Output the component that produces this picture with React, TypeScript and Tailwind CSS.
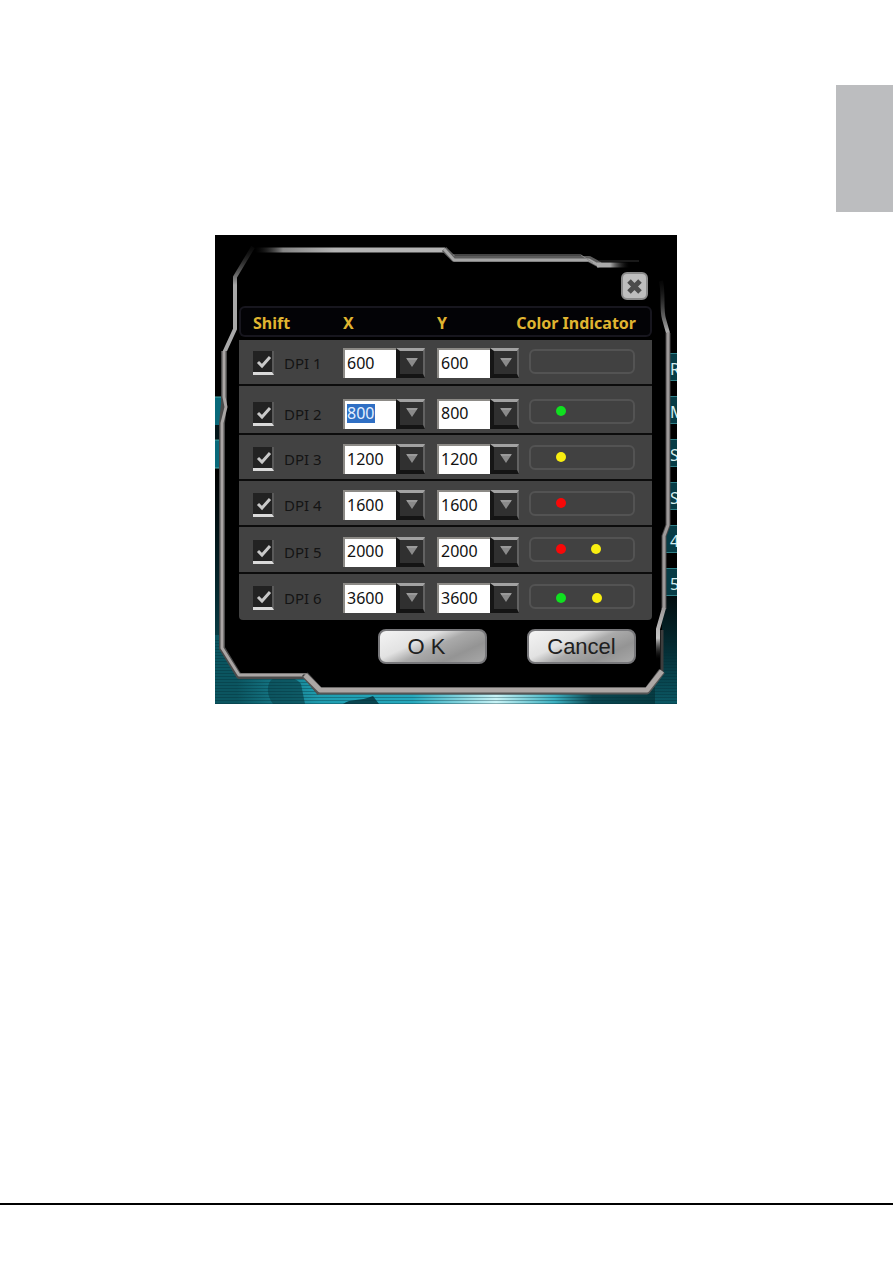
import React from "react";

type Led = { color: string; x: number; y: number };
type Level = {
  id: number;
  value: string;
  row: string;
  pad: string;
  leds: Led[];
  focused?: boolean;
};

const GREEN = "#10e020";
const YELLOW = "#f8ee10";
const RED = "#f80808";

const levels: Level[] = [
  { id: 1, value: "600", row: "h-[46px]", pad: "pt-0.5", leds: [] },
  { id: 2, value: "800", row: "h-[49px]", pad: "pt-2", leds: [{ color: GREEN, x: 32, y: 12 }], focused: true },
  { id: 3, value: "1200", row: "h-[46px]", pad: "pt-1", leds: [{ color: YELLOW, x: 32, y: 12 }] },
  { id: 4, value: "1600", row: "h-[46px]", pad: "pt-1", leds: [{ color: RED, x: 32, y: 12 }] },
  { id: 5, value: "2000", row: "h-[47px]", pad: "pt-1", leds: [{ color: RED, x: 32, y: 12 }, { color: YELLOW, x: 67, y: 12 }] },
  { id: 6, value: "3600", row: "h-[46px]", pad: "pt-0.5", leds: [{ color: GREEN, x: 32, y: 14 }, { color: YELLOW, x: 68, y: 14 }] },
];

const steps = ["600", "800", "1200", "1600", "2000", "3600"];
const sideItems = ["R", "M", "S", "S", "4", "5"];

function Backdrop() {
  return (
    <svg aria-hidden="true" className="absolute inset-0 h-full w-full" viewBox="0 0 462 469" preserveAspectRatio="none">
      <defs>
        <linearGradient id="sea" x1="0" x2="1" y1="0" y2="0">
          <stop offset="0" stopColor="#0b5560" />
          <stop offset="0.2" stopColor="#1f9db0" />
          <stop offset="0.42" stopColor="#27a9bd" />
          <stop offset="0.62" stopColor="#c8f3f6" />
          <stop offset="0.76" stopColor="#3cb0c0" />
          <stop offset="0.85" stopColor="#0a4650" />
          <stop offset="1" stopColor="#063b42" />
        </linearGradient>
        <linearGradient id="seaSide" x1="0" x2="0" y1="0" y2="1">
          <stop offset="0" stopColor="#000000" />
          <stop offset="0.5" stopColor="#04262c" />
          <stop offset="1" stopColor="#0b5864" />
        </linearGradient>
        <pattern id="scan" width="4" height="3" patternUnits="userSpaceOnUse">
          <rect width="4" height="1" fill="#022a33" opacity="0.35" />
        </pattern>
      </defs>
      <rect width="462" height="469" fill="#000" />
      <rect y="235" width="30" height="234" fill="url(#seaSide)" />
      <rect x="430" y="340" width="32" height="129" fill="url(#seaSide)" />
      <rect x="22" y="425" width="418" height="44" fill="url(#sea)" />
      <rect y="400" width="22" height="69" fill="#0b5560" />
      <path d="M56 445c8-6 24-4 30 4l4 20H58c-6-8-7-18-2-24Z" fill="#0b4d58" opacity="0.8" />
      <path d="M128 469c8-6 16-2 30-8l6 8Z" fill="#0a4550" />
      <rect y="405" width="462" height="64" fill="url(#scan)" />
      <rect y="162" width="12" height="28" fill="#08697a" />
      <rect y="190" width="12" height="14" fill="#02161a" />
      <rect y="205" width="12" height="28" fill="#08697a" />
      <path d="M0 162H12M0 205H12M0 233H12" stroke="#49a7a6" />
    </svg>
  );
}

function Frame() {
  const outline =
    "M38 10L20 42L20 94L9 116V166L12 172L7 188V413L24 440H91L105 457H432L447 436V374L449 300L453 292V98L447 82V46C447 34 443 28 432 26L388 27L376 22H240L230 15H48Z";
  return (
    <svg aria-hidden="true" className="absolute inset-0 h-full w-full" viewBox="0 0 462 469" preserveAspectRatio="none">
      <defs>
        <linearGradient id="topFade" x1="40" x2="120" y1="0" y2="0" gradientUnits="userSpaceOnUse">
          <stop offset="0" stopColor="#222" stopOpacity="0" />
          <stop offset="0.35" stopColor="#858585" />
          <stop offset="1" stopColor="#b4b4b4" />
        </linearGradient>
        <linearGradient id="leftFade" x1="0" x2="0" y1="12" y2="50" gradientUnits="userSpaceOnUse">
          <stop offset="0" stopColor="#222" stopOpacity="0.2" />
          <stop offset="1" stopColor="#a8a8a8" />
        </linearGradient>
        <linearGradient id="rightFade" x1="0" x2="0" y1="44" y2="96" gradientUnits="userSpaceOnUse">
          <stop offset="0" stopColor="#222" stopOpacity="0.1" />
          <stop offset="1" stopColor="#aaa" />
        </linearGradient>
        <linearGradient id="tailFade" x1="376" x2="414" y1="0" y2="0" gradientUnits="userSpaceOnUse">
          <stop offset="0" stopColor="#aaa" />
          <stop offset="0.5" stopColor="#aaa" />
          <stop offset="1" stopColor="#222" stopOpacity="0" />
        </linearGradient>
        <linearGradient id="lowFade" x1="0" x2="0" y1="372" y2="424" gradientUnits="userSpaceOnUse">
          <stop offset="0" stopColor="#9d9999" />
          <stop offset="0.6" stopColor="#c4c4c4" />
          <stop offset="1" stopColor="#222" stopOpacity="0" />
        </linearGradient>
      </defs>
      <path d={outline} fill="#000" />
      <g fill="none" strokeLinejoin="round">
        <path d="M38 12L20 42V94L9 118" stroke="url(#leftFade)" strokeWidth="4" />
        <path d="M9 116V168L7 188V413L24 441H91L105 458" stroke="#4a4a4a" strokeWidth="6" />
        <path d="M9 116V162L11 172L7 188V413L24 440H91" stroke="#a9a5a4" strokeWidth="3" />
        <path d="M40 15H230" stroke="url(#topFade)" strokeWidth="5" />
        <path d="M229 14L239 24H374L385 30" stroke="#5c5c5c" strokeWidth="6" />
        <path d="M229 14L239 25H374L385 31" stroke="#a6a6a6" strokeWidth="3" />
        <path d="M238 20H366L378 28" stroke="#8a8a8a" strokeWidth="1" />
        <path d="M382 30H414" stroke="url(#tailFade)" strokeWidth="5" />
        <path d="M384 26H424" stroke="#333" strokeWidth="1" />
        <path d="M446 46C449 60 446 74 449 84L453 98" stroke="url(#rightFade)" strokeWidth="4" />
        <path d="M453 98V290L449 301V374" stroke="#4b4848" strokeWidth="5" />
        <path d="M453 97V290L449 301V374" stroke="#9d9999" strokeWidth="3" />
        <path d="M449 373L443 394V424" stroke="url(#lowFade)" strokeWidth="4" />
        <path d="M88 440L105 456H432L447 437V395" stroke="#3d3d3d" strokeWidth="3" />
        <path d="M90 440L105 456H432L447 436" stroke="#555" strokeWidth="7" />
        <path d="M90 440L105 455H432L447 436" stroke="#aca7a5" strokeWidth="5" />
      </g>
    </svg>
  );
}

function SideMenu() {
  return (
    <ul className="absolute right-0 top-[118px] flex w-3 flex-col gap-[15px] overflow-hidden">
      {sideItems.map((item, i) => (
        <li
          key={i}
          className="flex h-[28px] items-center border-y border-[#2f7f86] bg-[#073c46] pl-[5px] pt-1 text-base leading-6 text-[#d5eef0]"
        >
          {item}
        </li>
      ))}
    </ul>
  );
}

function DpiSelect({ label, value, focused }: { label: string; value: string; focused?: boolean }) {
  const highlight = focused
    ? "bg-[linear-gradient(#2f6fc4,#2f6fc4)] bg-[length:28px_19px] bg-[position:2px_3px] bg-no-repeat text-[#e4efff]"
    : "text-[#111111]";
  return (
    <div className="grid w-[82px] grid-cols-[53px_29px] items-center">
      <select
        aria-label={label}
        defaultValue={value}
        className={`col-span-2 col-start-1 row-start-1 h-[30px] w-[53px] appearance-none border-l-2 border-t-2 border-[#8c8a86] bg-white pl-[2px] pb-[3px] text-base leading-6 outline-none ${highlight}`}
      >
        {steps.map((s) => (
          <option key={s} className="text-black">
            {s}
          </option>
        ))}
      </select>
      <span className="pointer-events-none col-start-2 row-start-1 flex h-[30px] items-center justify-center border-b-4 border-l-4 border-r-2 border-t-[3px] border-b-[#141414] border-l-[#161616] border-r-[#626262] border-t-[#a2a2a2] bg-[#303030]">
        <svg width="14" height="10" viewBox="0 0 14 10" aria-hidden="true">
          <path d="M1 0H13L7 9Z" fill="#8a8a8a" />
          <path d="M2 1H12" stroke="#aaa" />
        </svg>
      </span>
    </div>
  );
}

function Indicator({ leds }: { leds: Led[] }) {
  return (
    <svg width="106" height="25" viewBox="0 0 106 25" role="img" aria-label="Color indicator">
      <rect x="1" y="1" width="104" height="23" rx="5" fill="#414141" stroke="#535353" strokeWidth="2" />
      {leds.map((led) => (
        <circle key={led.x} cx={led.x} cy={led.y} r="5" fill={led.color} />
      ))}
    </svg>
  );
}

function LevelRow({ level }: { level: Level }) {
  const last = level.id === levels.length;
  const cell = `${last ? "" : "border-b-2 border-[#0c0c0c]"} ${level.pad} px-0 pb-0 align-middle`;
  return (
    <tr className={`${level.row} bg-[#424242]`}>
      <td className={`${cell} ${last ? "rounded-bl" : ""}`}>
        <label className="flex items-center gap-[10px] pl-[14px] text-[15px] leading-6 text-[#141414]">
          <span className="grid">
            <input
              type="checkbox"
              defaultChecked
              className="peer col-start-1 row-start-1 h-6 w-[21px] appearance-none border-b-[3px] border-r-2 border-b-[#dadada] border-r-[#5a5a5a] bg-[#222222]"
            />
            <svg
              viewBox="0 0 21 24"
              aria-hidden="true"
              className="pointer-events-none invisible col-start-1 row-start-1 h-6 w-[21px] peer-checked:visible"
            >
              <path d="M5 11L9 15L17 6" fill="none" stroke="#c8c8c8" strokeWidth="3" />
            </svg>
          </span>
          DPI {level.id}
        </label>
      </td>
      <td className={cell}>
        <DpiSelect label={`DPI ${level.id} X`} value={level.value} focused={level.focused} />
      </td>
      <td className={cell}>
        <DpiSelect label={`DPI ${level.id} Y`} value={level.value} />
      </td>
      <td className={`${cell} ${last ? "rounded-br" : ""}`}>
        <div className="flex pb-1">
          <Indicator leds={level.leds} />
        </div>
      </td>
    </tr>
  );
}

function DialogButton({ children, className = "" }: { children: React.ReactNode; className?: string }) {
  return (
    <button
      type="button"
      className={`h-[35px] w-[109px] rounded-lg border-2 border-[#77777a] bg-[linear-gradient(155deg,#f4f4f4_0%,#e2e2e2_35%,#aaaaaa_52%,#949494_75%,#a8a8a8_100%)] font-['Liberation_Sans',Arial,sans-serif] text-[22px] leading-7 text-[#202020] ${className}`}
    >
      {children}
    </button>
  );
}

export default function App() {
  const th = "border-y-2 border-[#17161e] bg-[#030306] px-0 pb-0 pt-[3px] text-left font-bold";
  return (
    <div className="flex min-h-screen flex-col bg-white font-['Noto_Sans',sans-serif]">
      <header className="flex h-[235px] justify-end pt-[85px]">
        <div className="h-[127px] w-[57px] bg-[#bcbdbf]" />
      </header>

      <main className="flex grow justify-center pr-px">
        <section
          role="dialog"
          aria-label="DPI settings"
          className="relative h-[469px] w-[462px] overflow-hidden bg-black"
        >
          <Backdrop />
          <SideMenu />
          <Frame />
          <div className="relative flex flex-col pl-6 pr-[25px] pt-[37px]">
            <div className="flex justify-end pr-1">
              <button
                type="button"
                aria-label="Close"
                className="flex h-7 w-[27px] items-center justify-center rounded-md border-2 border-[#8a8a8a] bg-[#bdbdbd]"
              >
                <svg width="17" height="17" viewBox="0 0 17 17" aria-hidden="true">
                  <path d="M3 3L14 14M14 3L3 14" stroke="#4c4c4c" strokeWidth="5" />
                </svg>
              </button>
            </div>

            <table className="mt-[6px] w-full table-fixed border-separate border-spacing-0">
              <colgroup>
                <col className="w-[104px]" />
                <col className="w-[94px]" />
                <col className="w-[92px]" />
                <col />
              </colgroup>
              <thead>
                <tr className="h-[31px] text-base leading-6 text-[#e0b530]">
                  <th className={`${th} rounded-l-md border-l-2`}>
                    <div className="pl-3">Shift</div>
                  </th>
                  <th className={th}>X</th>
                  <th className={th}>Y</th>
                  <th className={`${th} rounded-r-md border-r-2`}>
                    <div className="flex justify-end whitespace-nowrap pr-[14px]">Color Indicator</div>
                  </th>
                </tr>
              </thead>
              <tbody>
                <tr aria-hidden="true" className="h-[3px]">
                  <td colSpan={4} className="p-0" />
                </tr>
                {levels.map((level) => (
                  <LevelRow key={level.id} level={level} />
                ))}
              </tbody>
            </table>

            <div className="mt-[9px] flex justify-end gap-10 pr-4">
              <DialogButton className="pr-3">O K</DialogButton>
              <DialogButton>Cancel</DialogButton>
            </div>
          </div>
        </section>
      </main>

      <footer className="h-[60px] border-t-2 border-black" />
    </div>
  );
}
